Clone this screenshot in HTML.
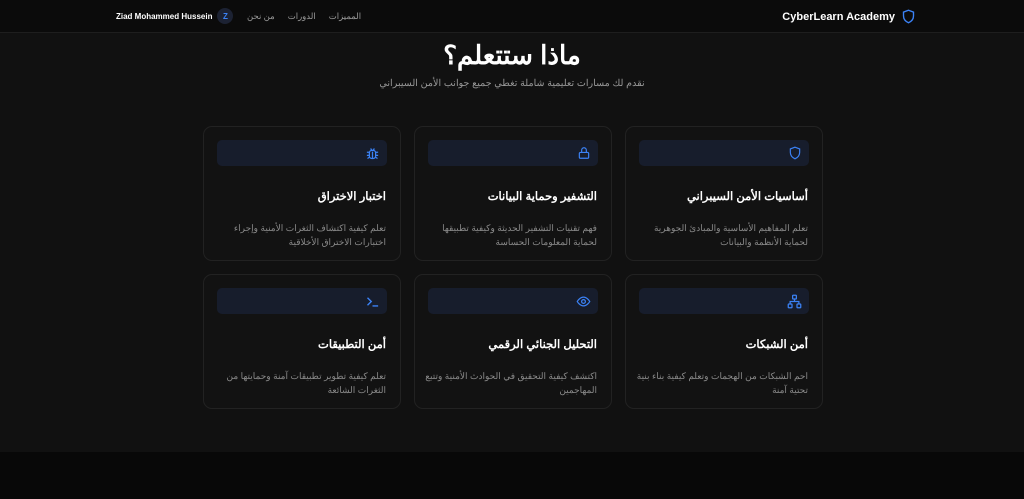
<!DOCTYPE html>
<html dir="rtl"><head><meta charset="utf-8"><style>
*{box-sizing:border-box;margin:0;padding:0}
body{width:1024px;height:499px;background:#111111;font-family:"Liberation Sans","Noto Sans CJK SC",sans-serif;color:#fff;position:relative;overflow:hidden}
.hdr{position:absolute;top:0;left:0;width:1024px;height:33px;background:#0b0b0b;border-bottom:1px solid #1e1e1e}
.logo{position:absolute;right:108px;top:8px;font-weight:bold;font-size:11px;direction:ltr;display:flex;align-items:center;gap:6px}
.nav{position:absolute;left:247px;top:11px;font-size:8.5px;color:#9a9a9a;direction:ltr;display:flex;gap:13px}
.user{position:absolute;left:116px;top:8px;direction:ltr;display:flex;align-items:center;gap:5px;font-size:8px;font-weight:bold}
.av{width:16px;height:16px;border-radius:50%;background:#1c2233;color:#3b82f6;font-size:8px;display:flex;align-items:center;justify-content:center}
h1{position:absolute;top:40px;left:0;width:1024px;text-align:center;font-size:26px;font-weight:bold}
.sub{position:absolute;top:78px;left:0;width:1024px;text-align:center;font-size:9.6px;color:#9a9a9a}
.card{position:absolute;width:198px;height:135px;background:#121212;border:1px solid #222;border-radius:9px}
.ib{position:absolute;left:13px;right:13px;top:13px;height:26px;background:#171d2c;border-radius:5px}
.ib svg{position:absolute;right:7px;top:6px}
.t{position:absolute;right:14px;top:62px;font-size:11.5px;font-weight:bold;white-space:nowrap}
.d{position:absolute;right:14px;top:94px;width:180px;font-size:9px;line-height:14px;color:#8a8a8a}
.foot{position:absolute;top:452px;left:0;width:1024px;height:47px;background:#080808}
</style></head><body>
<div class="hdr">
<div class="logo">CyberLearn Academy <svg width="15" height="17" viewBox="0 0 24 24" fill="none" stroke="#3b82f6" stroke-width="2.2"><path d="M12 2l8 3v6c0 5-3.5 9-8 11-4.5-2-8-6-8-11V5z"/></svg></div>
<div class="nav"><span>من نحن</span><span>الدورات</span><span>المميزات</span></div>
<div class="user">Ziad Mohammed Hussein <div class="av">Z</div></div>
</div>
<h1>ماذا ستتعلم؟</h1>
<div class="sub">نقدم لك مسارات تعليمية شاملة تغطي جميع جوانب الأمن السيبراني</div>

<div class="card" style="left:625px;top:126px"><div class="ib"><svg width="14" height="14" viewBox="0 0 24 24" fill="none" stroke="#3b82f6" stroke-width="2"><path d="M12 2l8 3v6c0 5-3.5 9-8 11-4.5-2-8-6-8-11V5z"/></svg></div><div class="t">أساسيات الأمن السيبراني</div><div class="d">تعلم المفاهيم الأساسية والمبادئ الجوهرية لحماية الأنظمة والبيانات</div></div>
<div class="card" style="left:414px;top:126px"><div class="ib"><svg width="14" height="14" viewBox="0 0 24 24" fill="none" stroke="#3b82f6" stroke-width="2"><rect x="4" y="11" width="16" height="10" rx="2"/><path d="M8 11V7a4 4 0 018 0v4"/></svg></div><div class="t">التشفير وحماية البيانات</div><div class="d">فهم تقنيات التشفير الحديثة وكيفية تطبيقها لحماية المعلومات الحساسة</div></div>
<div class="card" style="left:203px;top:126px"><div class="ib"><svg width="15" height="15" viewBox="0 0 24 24" fill="none" stroke="#3b82f6" stroke-width="2"><rect x="7" y="7" width="10" height="13" rx="4"/><path d="M9 4l2 3M15 4l-2 3M3 10h4M17 10h4M3 15h4M17 15h4M4 20l3-2M20 20l-3-2M12 9v11"/></svg></div><div class="t">اختبار الاختراق</div><div class="d">تعلم كيفية اكتشاف الثغرات الأمنية وإجراء اختبارات الاختراق الأخلاقية</div></div>

<div class="card" style="left:625px;top:274px"><div class="ib"><svg width="15" height="15" viewBox="0 0 24 24" fill="none" stroke="#3b82f6" stroke-width="2"><rect x="9" y="2" width="6" height="6" rx="1"/><rect x="2" y="16" width="6" height="6" rx="1"/><rect x="16" y="16" width="6" height="6" rx="1"/><path d="M12 8v4M5 16v-4h14v4"/></svg></div><div class="t">أمن الشبكات</div><div class="d" style="width:190px">احم الشبكات من الهجمات وتعلم كيفية بناء بنية تحتية آمنة</div></div>
<div class="card" style="left:414px;top:274px"><div class="ib"><svg width="15" height="15" viewBox="0 0 24 24" fill="none" stroke="#3b82f6" stroke-width="2"><path d="M2 12s4-7 10-7 10 7 10 7-4 7-10 7S2 12 2 12z"/><circle cx="12" cy="12" r="3"/></svg></div><div class="t">التحليل الجنائي الرقمي</div><div class="d">اكتشف كيفية التحقيق في الحوادث الأمنية وتتبع المهاجمين</div></div>
<div class="card" style="left:203px;top:274px"><div class="ib"><svg width="15" height="15" viewBox="0 0 24 24" fill="none" stroke="#3b82f6" stroke-width="2.2"><path d="M4 6l6 6-6 6M12 19h9"/></svg></div><div class="t">أمن التطبيقات</div><div class="d">تعلم كيفية تطوير تطبيقات آمنة وحمايتها من الثغرات الشائعة</div></div>

<div class="foot"></div>
</body></html>
